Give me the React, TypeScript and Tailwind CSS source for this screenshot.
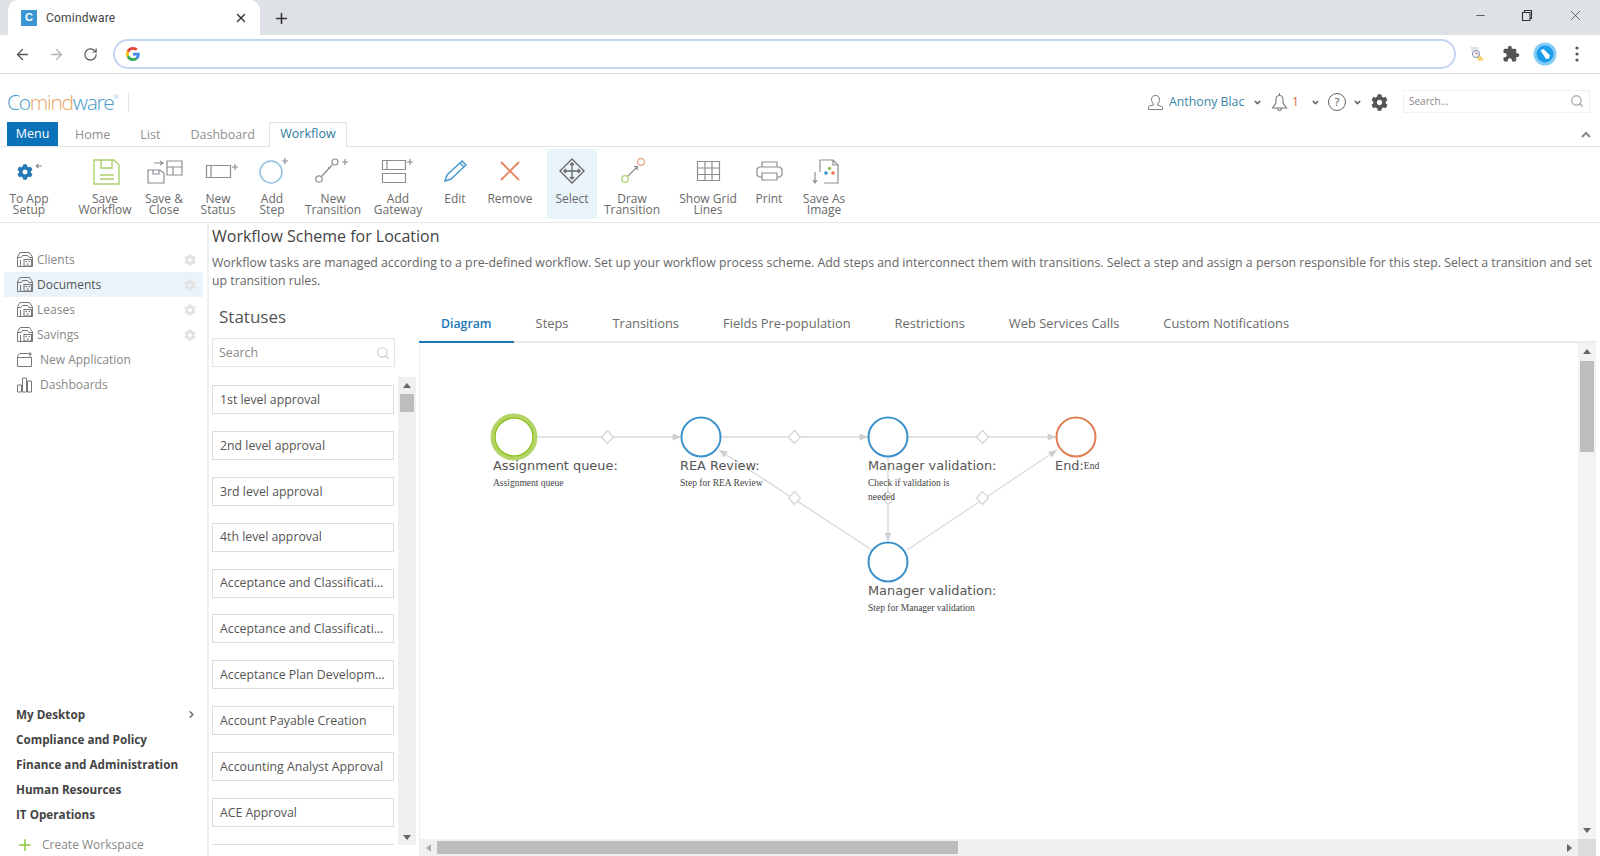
import { FaCog } from 'react-icons/fa';
import { ArrowLeft, ArrowRight, RotateCw, X, Plus, Minus, Search, ChevronDown, ChevronRight } from 'lucide-react';

const S = { fill: 'none', stroke: '#8a8f94', strokeWidth: 1.2 };

function Ico({ x, w, children }: { x: number; w: number; children: React.ReactNode }) {
  // coordinates inside are page coordinates, the strip starts at y 157
  return (
    <svg width={w} height={30} viewBox={`${x} 157 ${w} 30`} className="block">
      {children}
    </svg>
  );
}

function Tiny({ x, y }: { x: number; y: number }) {
  return <path d={`M${x - 3} ${y}h6M${x} ${y - 3}v6`} stroke="#8a8f94" strokeWidth="1.2" />;
}

const ribbon = [
  {
    label: ['To App', 'Setup'], box: 'w-[48px] ml-[5px]', x: 5, w: 48,
    icon: (
      <>
        <path d="M36 166h6M36 166l2.5-2M36 166l2.5 2" {...S} />
        <foreignObject x="17" y="164" width="16" height="16"><FaCog className="text-[#2277b5]" size={16} /></foreignObject>
      </>
    ),
  },
  {
    label: ['Save', 'Workflow'], box: 'w-[58px] ml-[23px]', x: 76, w: 58,
    icon: (
      <g fill="none" stroke="#a9d06e" strokeWidth="1.4">
        <path d="M94 160h20l5 5v19H94z" />
        <path d="M101 160v8h11v-8M100 175h14M100 179h14" />
      </g>
    ),
  },
  {
    label: ['Save &', 'Close'], box: 'w-[50px] ml-[5px]', x: 139, w: 50,
    icon: (
      <>
        <path d="M148 170h12l4 3v10h-16zM153 170v4h6v-4" {...S} />
        <path d="M154 163h9M160 161l3 2-3 2" {...S} />
        <path d="M167 161h15v14h-15zM167 167h15M173 167v8" {...S} />
      </>
    ),
  },
  {
    label: ['New', 'Status'], box: 'w-[50px] ml-[4px]', x: 193, w: 50,
    icon: (
      <>
        <path d="M206.5 165.5h24v12h-24zM211 165.5v12" {...S} />
        <Tiny x={235} y={167} />
      </>
    ),
  },
  {
    label: ['Add', 'Step'], box: 'w-[50px] ml-[4px]', x: 247, w: 50,
    icon: (
      <>
        <circle cx="271" cy="172" r="11" fill="none" stroke="#8fc2de" strokeWidth="1.5" />
        <Tiny x={285} y={161} />
      </>
    ),
  },
  {
    label: ['New', 'Transition'], box: 'w-[64px] ml-[4px]', x: 301, w: 64,
    icon: (
      <>
        <circle cx="319" cy="179" r="3.2" {...S} />
        <circle cx="335" cy="162" r="3" {...S} />
        <path d="M322 176l10-11" {...S} />
        <circle cx="329" cy="168" r="1" fill="#8a8f94" />
        <Tiny x={345} y={162} />
      </>
    ),
  },
  {
    label: ['Add', 'Gateway'], box: 'w-[54px] ml-[6px]', x: 371, w: 54,
    icon: (
      <>
        <path d="M382.5 160.5h23v9h-23zM387 160.5v9M382.5 173.5h23v9h-23z" {...S} />
        <Tiny x={410} y={162} />
      </>
    ),
  },
  {
    label: ['Edit'], box: 'w-[40px] ml-[10px]', x: 435, w: 40,
    icon: (
      <path d="M445 181l2-6 15-14 4 4-15 14zM460 163l4 4" fill="none" stroke="#4a9cd0" strokeWidth="1.5" />
    ),
  },
  {
    label: ['Remove'], box: 'w-[50px] ml-[10px]', x: 485, w: 50,
    icon: <path d="M501 162l18 18M519 162l-18 18" stroke="#e8845c" strokeWidth="1.8" />,
  },
  {
    label: ['Select'], box: 'w-[50px] ml-[12px] bg-[#e9f3fa] rounded-[2px]', x: 547, w: 50,
    icon: (
      <g fill="none" stroke="#666" strokeWidth="1.3">
        <path d="M572 159l12 12-12 12-12-12z" />
        <path d="M572 163v16M564 171h16M570 165l2-2 2 2M570 177l2 2 2-2M566 169l-2 2 2 2M578 169l2 2-2 2" />
      </g>
    ),
  },
  {
    label: ['Draw', 'Transition'], box: 'w-[60px] ml-[5px]', x: 602, w: 60,
    icon: (
      <>
        <circle cx="625" cy="179" r="3.3" fill="none" stroke="#a9d06e" strokeWidth="1.2" />
        <circle cx="641" cy="162" r="3.3" fill="none" stroke="#e8a48c" strokeWidth="1.2" />
        <path d="M628 176l9-9M634 166.5l3.5 0 -.5 3.5" {...S} />
      </>
    ),
  },
  {
    label: ['Show Grid', 'Lines'], box: 'w-[64px] ml-[14px]', x: 676, w: 64,
    icon: <path d="M697.5 161.5h22v19h-22zM697.5 168h22M697.5 174.5h22M705 161.5v19M712 161.5v19" {...S} />,
  },
  {
    label: ['Print'], box: 'w-[40px] ml-[9px]', x: 749, w: 40,
    icon: (
      <path d="M762 167v-5h15v5M762 177h-3l-2-2v-6l2-2h21l2 2v6l-2 2h-3M762 173h15v7h-15z" {...S} />
    ),
  },
  {
    label: ['Save As', 'Image'], box: 'w-[50px] ml-[10px]', x: 799, w: 50,
    icon: (
      <>
        <path d="M820 172v-12h13l5 5v18h-14M833 160v5h5M815 172v11M813 180l2 3 2-3" {...S} />
        <circle cx="826" cy="173" r="1.8" fill="#3b8fc4" />
        <circle cx="829.5" cy="168.5" r="1.8" fill="#8cc152" />
        <circle cx="833" cy="173" r="1.8" fill="#e8744f" />
      </>
    ),
  },
];

function Workspace() {
  return (
    <svg width="18" height="17" viewBox="0 0 18 17" fill="none" stroke="#777" strokeWidth="1" className="shrink-0">
      <path d="M1.5 15.5V6L4 1.500h9.500L16.500 6v9.500z" />
      <path d="M1.500 6.500H5l1.500-2h5l1.500 2h3.500" />
      <rect x="8" y="8.500" width="7.500" height="6.500" />
      <path d="M4.500 9v6" />
      <circle cx="10.200" cy="10.500" r=".8" fill="#666" stroke="none" />
      <circle cx="13.300" cy="10.500" r=".8" fill="#666" stroke="none" />
      <circle cx="11.700" cy="13" r=".8" fill="#666" stroke="none" />
    </svg>
  );
}

const apps = ['Clients', 'Documents', 'Leases', 'Savings'];
const workspaces = ['Compliance and Policy', 'Finance and Administration', 'Human Resources', 'IT Operations'];
const statuses = [
  '1st level approval', '2nd level approval', '3rd level approval', '4th level approval',
  'Acceptance and Classification', 'Acceptance and Classification', 'Acceptance Plan Development',
  'Account Payable Creation', 'Accounting Analyst Approval', 'ACE Approval', 'Acknowledgement',
];
const tabs = ['Diagram', 'Steps', 'Transitions', 'Fields Pre-population', 'Restrictions', 'Web Services Calls', 'Custom Notifications'];

function Tri({ d }: { d: 'u' | 'd' | 'l' | 'r' }) {
  const p = { u: 'M0 6l4-5 4 5z', d: 'M0 2l4 5 4-5z', l: 'M6 0l-5 4 5 4z', r: 'M2 0l5 4-5 4z' }[d];
  return <svg width="8" height="8" viewBox="0 0 8 8"><path d={p} fill={d === 'l' ? '#aaa' : '#666'} /></svg>;
}

function Diamond({ x, y }: { x: number; y: number }) {
  return <path d={`M${x} ${y - 6.5}l6 6.5-6 6.5-6-6.5z`} fill="#fff" stroke="#d5d5d5" strokeWidth="1.2" />;
}

function Arrow({ x1, y1, x2, y2 }: { x1: number; y1: number; x2: number; y2: number }) {
  const a = Math.atan2(y2 - y1, x2 - x1);
  const pt = (r: number, t: number) => `${x2 + r * Math.cos(a + t)} ${y2 + r * Math.sin(a + t)}`;
  return (
    <>
      <line x1={x1} y1={y1} x2={x2} y2={y2} stroke="#d9d9d9" strokeWidth="1.3" />
      <path d={`M${x2} ${y2}L${pt(-9, 0.4)}L${pt(-9, -0.4)}z`} fill="#cfcfcf" />
    </>
  );
}

function Step({ box, title, desc }: { box: string; title: string; desc: string[] }) {
  return (
    <div className={`absolute font-['DejaVu_Sans'] ${box}`}>
      <div className="text-[12.9px] leading-[18px] text-[#555] whitespace-nowrap">{title}</div>
      <div className="mt-px text-[9.5px] leading-[14px] text-[#444] font-['Liberation_Serif'] whitespace-nowrap">
        {desc.map((d) => <div key={d}>{d}</div>)}
      </div>
    </div>
  );
}

export default function App() {
  return (
    <div className="h-[856px] w-[1600px] overflow-hidden flex flex-col bg-white font-['Open_Sans',sans-serif] text-[#666]">
      {/* browser tabs */}
      <div className="h-[35px] bg-[#dee1e6] flex items-end shrink-0">
        <div className="ml-[8px] w-[252px] h-[35px] bg-white rounded-t-[10px] flex items-center pl-[13px] pr-[12px]">
          <div className="w-[16px] h-[16px] bg-[#3b97d3] text-white text-[11px] font-bold flex items-center justify-center font-['Liberation_Sans']">C</div>
          <span className="ml-[9px] text-[12px] text-[#444] font-['Roboto'] tracking-[0.2px]">Comindware</span>
          <X size={14} strokeWidth={2.4} className="ml-auto text-[#333]" />
        </div>
        <Plus size={17} strokeWidth={2.2} className="ml-[13px] mb-[8px] text-[#333]" />
        <div className="ml-auto flex items-center h-[35px] pb-[5px] text-[#333]">
          <Minus size={13} strokeWidth={1.4} className="mr-[34px]" />
          <svg width="12" height="12" viewBox="0 0 12 12" fill="none" stroke="#333" strokeWidth="1.1" className="mr-[34px]">
            <path d="M1.5 3.5H9v8H1.500zM3.500 3.500v-2h7v8H9" />
          </svg>
          <X size={17} strokeWidth={1} className="mr-[16px]" />
        </div>
      </div>
      {/* browser toolbar */}
      <div className="h-[39px] flex items-center border-b border-[#dcdfe3] shrink-0 text-[#555]">
        <ArrowLeft size={17} strokeWidth={1.8} className="ml-[14px]" />
        <ArrowRight size={17} strokeWidth={1.8} className="ml-[17px] text-[#b5b5b5]" />
        <RotateCw size={15} strokeWidth={1.8} className="ml-[18px]" />
        <div className="ml-[15px] w-[1343px] h-[30px] rounded-full border-2 border-[#c3d5ef] flex items-center pl-[11px]">
          <svg width="14" height="14" viewBox="0 0 48 48">
            <path fill="#EA4335" d="M24 9.5c3.540 0 6.710 1.220 9.210 3.600l6.850-6.850C35.900 2.380 30.470 0 24 0 14.620 0 6.510 5.380 2.560 13.220l7.980 6.190C12.430 13.720 17.740 9.500 24 9.500z" />
            <path fill="#4285F4" d="M46.980 24.550c0-1.570-.15-3.090-.38-4.550H24v9.020h12.940c-.58 2.960-2.260 5.480-4.780 7.180l7.730 6c4.510-4.180 7.090-10.360 7.090-17.650z" />
            <path fill="#FBBC05" d="M10.530 28.590c-.48-1.450-.76-2.990-.76-4.590s.27-3.140.76-4.590l-7.980-6.190C.92 16.460 0 20.120 0 24c0 3.880.92 7.540 2.560 10.780l7.970-6.190z" />
            <path fill="#34A853" d="M24 48c6.480 0 11.930-2.130 15.890-5.810l-7.730-6c-2.150 1.450-4.920 2.300-8.160 2.300-6.260 0-11.570-4.220-13.470-9.910l-7.980 6.190C6.510 42.620 14.620 48 24 48z" />
          </svg>
        </div>
        <svg width="18" height="18" viewBox="0 0 18 18" className="ml-[12px]">
          <path d="M2 2h8l2 6H4z" fill="#e4e4e8" />
          <path d="M11 9l5 6-5 1-3-4z" fill="#f5d769" />
          <circle cx="8" cy="9" r="3.5" fill="#fff" stroke="#7a8fb5" />
          <path d="M8 7v2h2" stroke="#c66" fill="none" />
        </svg>
        <svg width="18" height="18" viewBox="0 0 24 24" fill="#555" className="ml-[16px]">
          <path d="M20.5 11H19V7c0-1.100-.9-2-2-2h-4V3.500C13 2.120 11.880 1 10.500 1S8 2.120 8 3.500V5H4c-1.100 0-1.990.9-1.990 2v3.800H3.500c1.490 0 2.700 1.210 2.700 2.700s-1.210 2.700-2.700 2.700H2V20c0 1.100.9 2 2 2h3.800v-1.500c0-1.490 1.210-2.700 2.700-2.700 1.490 0 2.700 1.210 2.700 2.700V22H17c1.100 0 2-.9 2-2v-4h1.500c1.380 0 2.500-1.120 2.500-2.500S21.880 11 20.500 11z" />
        </svg>
        <svg width="24" height="24" viewBox="0 0 24 24" className="ml-[13px]">
          <circle cx="12" cy="12" r="11.5" fill="#86cdf6" />
          <circle cx="12" cy="12" r="8.5" fill="#1d9cec" />
          <path d="M7.500 8.500l3-1.500 6.500 6.500-1 3-3 .5z" fill="#fff" />
        </svg>
        <svg width="4" height="16" viewBox="0 0 4 16" fill="#555" className="ml-[18px]">
          <circle cx="2" cy="2" r="1.6" /><circle cx="2" cy="8" r="1.6" /><circle cx="2" cy="14" r="1.6" />
        </svg>
      </div>
      {/* app header */}
      <div className="h-[48px] flex items-center shrink-0 pt-[8px]">
        <div className="ml-[7px] text-[21px] font-light tracking-[-1.3px] leading-none text-[#4a9ccb] whitespace-nowrap">
          Co<span className="text-[#eaa768]">mind</span>ware<sup className="text-[6px] top-[-11px]">®</sup>
        </div>
        <div className="ml-[11px] w-px h-[19px] bg-[#e3e3e3]" />
        <div className="ml-auto flex items-center">
          <svg width="15" height="17" viewBox="0 0 17 18" fill="none" stroke="#777" strokeWidth="1.1">
            <path d="M6 10.500c-1-1-2-3-2-5.200C4 2.800 6 1 8.500 1S13 2.800 13 5.300c0 2.200-1 4.200-2 5.200V12l4.500 1.500c.7.300 1 .8 1 1.500v2H.5v-2.500c0-.7.300-1.200 1-1.500L6 12z" />
          </svg>
          <span className="ml-[6px] w-[76px] overflow-hidden whitespace-nowrap text-[12.3px] text-[#3a86a8]">Anthony Black</span>
          <ChevronDown size={9} strokeWidth={4} className="ml-[8px] text-[#666]" />
          <svg width="17" height="19" viewBox="0 0 17 19" fill="none" stroke="#777" strokeWidth="1.1" className="ml-[9px]">
            <path d="M8.500 0v2.500M8.500 2.500c-2.500 0-3.500 2-3.500 4V10l-3.500 5h14L12 10V6.500c0-2-1-4-3.500-4zM6.500 15c0 1.500 1 2.500 2 2.500s2-1 2-2.500" />
          </svg>
          <span className="ml-[4px] w-[7px] text-[12px] text-[#d9694a]">1</span>
          <ChevronDown size={9} strokeWidth={4} className="ml-[12px] text-[#666]" />
          <div className="ml-[8px] w-[18px] h-[18px] rounded-full border border-[#666] flex items-center justify-center text-[11.5px] text-[#555]">?</div>
          <ChevronDown size={9} strokeWidth={4} className="ml-[7px] text-[#666]" />
          <FaCog size={17} className="ml-[9px] text-[#555]" />
          <div className="ml-[15px] mr-[10px] mt-[-2px] w-[187px] h-[23px] border border-[#f0f0f0] flex items-center pl-[5px] pr-[5px] text-[10px] text-[#888]">
            Search...
            <Search size={14} strokeWidth={2.2} className="ml-auto text-[#aaa]" />
          </div>
        </div>
      </div>
      {/* app tabs */}
      <div className="h-[25px] flex items-end border-b border-[#dfe1e3] shrink-0 text-[12.5px] text-[#8f8f8f]">
        <div className="ml-[7px] w-[51px] h-[24px] bg-[#0a72b8] text-white flex items-center justify-center">Menu</div>
        <span className="ml-[17px] h-[23px] leading-[23px]">Home</span>
        <span className="ml-[30px] h-[23px] leading-[23px]">List</span>
        <span className="ml-[30px] h-[23px] leading-[23px]">Dashboard</span>
        <div className="ml-[14px] w-[78px] h-[25px] border border-b-0 border-[#e0e2e4] bg-white flex items-center justify-center text-[#2b7b9e] mb-[-1px] pb-[1px]">Workflow</div>
        <svg width="10" height="8" viewBox="0 0 10 8" className="ml-auto mr-[9px] mb-[7px]">
          <path d="M1 6l4-4 4 4" fill="none" stroke="#888" strokeWidth="2" />
        </svg>
      </div>
      {/* ribbon */}
      <div className="h-[76px] flex items-start border-b border-[#e4e6e8] shrink-0 pt-[2px]">
        {ribbon.map((r) => (
          <div key={r.label.join(' ')} className={`h-[70px] pt-[8px] shrink-0 text-center text-[12px] leading-[11px] text-[#6a6a6a] ${r.box}`}>
            <Ico x={r.x} w={r.w}>{r.icon}</Ico>
            <div className="mt-[5.5px] whitespace-nowrap">
              {r.label.map((l) => <div key={l}>{l}</div>)}
            </div>
          </div>
        ))}
      </div>
      <div className="flex-1 min-h-0 flex">
        {/* sidebar */}
        <div className="w-[209px] shrink-0 border-r-2 border-[#eef0f1] flex flex-col pt-[24px] text-[12px]">
          {apps.map((a) => (
            <div key={a} className={`h-[25px] mx-[4px] flex items-center pl-[12px] pr-[7px] ${a === 'Documents' ? 'bg-[#eaf3fa] text-[#555]' : 'text-[#888]'}`}>
              <Workspace />
              <span className="ml-[3px]">{a}</span>
              <FaCog size={12} className="ml-auto text-[#e2e2e2]" />
            </div>
          ))}
          <div className="h-[25px] mx-[4px] flex items-center pl-[12px] text-[#888]">
            <svg width="18" height="17" viewBox="0 0 18 17" fill="none" stroke="#777" strokeWidth="1">
              <path d="M1.500 15.500v-10l2-3h9M1.500 6.500h14M15.500 6.500v9h-14M14 1v5M12 3h4" />
            </svg>
            <span className="ml-[6px]">New Application</span>
          </div>
          <div className="h-[25px] mx-[4px] flex items-center pl-[12px] text-[#888]">
            <svg width="18" height="17" viewBox="0 0 18 17" fill="none" stroke="#777" strokeWidth="1">
              <path d="M1.500 16V9h4v7zM6.500 16V2h4v14zM11.500 16V5h4v11z" />
            </svg>
            <span className="ml-[6px]">Dashboards</span>
          </div>
          <div className="mt-auto pl-[16px] pr-[10px] font-bold text-[11.7px] text-[#444]">
            <div className="h-[25px] flex items-center justify-between">
              My Desktop
              <ChevronRight size={11} strokeWidth={3} className="text-[#666]" />
            </div>
            {workspaces.map((w) => <div key={w} className="h-[25px] flex items-center">{w}</div>)}
            <div className="h-[29px] flex items-center pt-[6px] font-normal text-[12px] text-[#888]">
              <Plus size={18} strokeWidth={2} className="text-[#8cc63f]" />
              <span className="ml-[8px]">Create Workspace</span>
            </div>
          </div>
        </div>
        {/* main */}
        <div className="flex-1 min-w-0 flex flex-col pl-[3px]">
          <h1 className="text-[16px] leading-[24px] pt-px text-[#444]">Workflow Scheme for Location</h1>
          <p className="mt-[6px] w-[1385px] text-[12.3px] leading-[18px] text-[#666]">
            Workflow tasks are managed according to a pre-defined workflow. Set up your workflow process scheme. Add steps and interconnect them with transitions. Select a step and assign a person responsible for this step. Select a transition and set up transition rules.
          </p>
          <div className="flex-1 min-h-0 flex">
            <div className="w-[204px] shrink-0 pt-[13px]">
              <h2 className="pl-[7px] text-[17px] leading-[28px] text-[#555]">Statuses</h2>
              <div className="mt-[7px] w-[183px] h-[29px] border border-[#e4e4e4] flex items-center pl-[6px] pr-[4px] pt-px text-[12.3px] text-[#888]">
                Search
                <Search size={14} strokeWidth={2} className="ml-auto text-[#ccc]" />
              </div>
              <div className="mt-[10px] h-[468px] flex">
                <div className="w-[182px] h-full overflow-hidden pt-[8px] flex flex-col gap-[16.9px]">
                  {statuses.map((s, i) => (
                    <div key={i} className="h-[29px] shrink-0 border border-[#dcdcdc] flex items-center pl-[7px] pr-[5px] pt-px text-[12.3px] text-[#555]">
                      <span className="truncate">{s}</span>
                    </div>
                  ))}
                </div>
                <div className="ml-[4px] w-[18px] bg-[#f0f0f0] flex flex-col items-center">
                  <div className="h-[17px] flex items-center"><Tri d="u" /></div>
                  <div className="w-[14px] h-[18px] bg-[#bdbdbd]" />
                  <div className="mt-auto h-[17px] flex items-center"><Tri d="d" /></div>
                </div>
              </div>
            </div>
            <div className="flex-1 min-w-0 flex flex-col ml-[3px] pr-[4px]">
              <div className="mt-[15px] h-[38px] flex border-b-2 border-[#e9ebec] text-[12.9px] font-medium text-[#6a6a6a] shrink-0">
                {tabs.map((t) => (
                  <div key={t} className={`px-[22px] h-[38px] flex items-center ${t === 'Diagram' ? 'text-[#1c76b6] border-y-2 border-t-transparent border-b-[#1c76b6] font-semibold text-[12.3px]' : ''}`}>{t}</div>
                ))}
              </div>
              <div className="flex-1 min-h-0 flex">
                <div className="flex-1 min-w-0 flex flex-col border-l border-[#eceeef]">
                  {/* diagram canvas */}
                  <div className="relative flex-1 min-h-0 overflow-hidden">
                    <svg width="1159" height="496" viewBox="420 343 1159 496" className="absolute left-0 top-0">
                      <Arrow x1={534} y1={437} x2={681} y2={437} />
                      <Arrow x1={721} y1={437} x2={868} y2={437} />
                      <Arrow x1={908} y1={437} x2={1056} y2={437} />
                      <Arrow x1={888} y1={457} x2={888} y2={541} />
                      <Arrow x1={872} y1={550} x2={719} y2={450} />
                      <Arrow x1={907} y1={550} x2={1057} y2={450} />
                      <Diamond x={607.5} y={437} />
                      <Diamond x={794.5} y={437} />
                      <Diamond x={982.5} y={437} />
                      <Diamond x={794.5} y={498} />
                      <Diamond x={982.5} y={498} />
                      <Diamond x={888} y={498} />
                      <circle cx="514" cy="437" r="21.5" fill="#fff" stroke="#b3d568" strokeWidth="4" />
                      <circle cx="514" cy="437" r="19" fill="none" stroke="#8fc21e" strokeWidth="1.5" />
                      <circle cx="701" cy="437" r="19.5" fill="#fff" stroke="#3c93cb" strokeWidth="2" />
                      <circle cx="888" cy="437" r="19.5" fill="#fff" stroke="#3c93cb" strokeWidth="2" />
                      <circle cx="1076" cy="437" r="19.5" fill="#fff" stroke="#e07f55" strokeWidth="2" />
                      <circle cx="888" cy="562" r="19.5" fill="#fff" stroke="#3c93cb" strokeWidth="2" />
                    </svg>
                    <Step box="left-[73px] top-[114px]" title="Assignment queue:" desc={['Assignment queue']} />
                    <Step box="left-[260px] top-[114px]" title="REA Review:" desc={['Step for REA Review']} />
                    <Step box="left-[448px] top-[114px]" title="Manager validation:" desc={['Check if validation is', 'needed']} />
                    <Step box="left-[448px] top-[239px]" title="Manager validation:" desc={['Step for Manager validation']} />
                    <div className="absolute left-[635px] top-[114px] flex items-center font-['DejaVu_Sans'] text-[12.9px] leading-[18px] text-[#555]">
                      End:<span className="text-[9.5px] text-[#444] font-['Liberation_Serif']">End</span>
                    </div>
                  </div>
                  {/* horizontal scrollbar */}
                  <div className="h-[17px] bg-[#f0f0f0] flex items-center shrink-0">
                    <div className="w-[17px] flex justify-center"><Tri d="l" /></div>
                    <div className="w-[521px] h-[13px] bg-[#bdbdbd]" />
                    <div className="ml-auto mr-[5px] flex"><Tri d="r" /></div>
                  </div>
                </div>
                {/* vertical scrollbar */}
                <div className="w-[18px] flex flex-col bg-[#f3f3f3] shrink-0">
                  <div className="flex-1 min-h-0 flex flex-col items-center">
                    <div className="h-[18px] flex items-center"><Tri d="u" /></div>
                    <div className="w-[14px] h-[91px] bg-[#bdbdbd]" />
                    <div className="mt-auto h-[18px] flex items-center"><Tri d="d" /></div>
                  </div>
                  <div className="h-[17px] bg-[#dcdcdc] shrink-0" />
                </div>
              </div>
            </div>
          </div>
        </div>
      </div>
    </div>
  );
}
